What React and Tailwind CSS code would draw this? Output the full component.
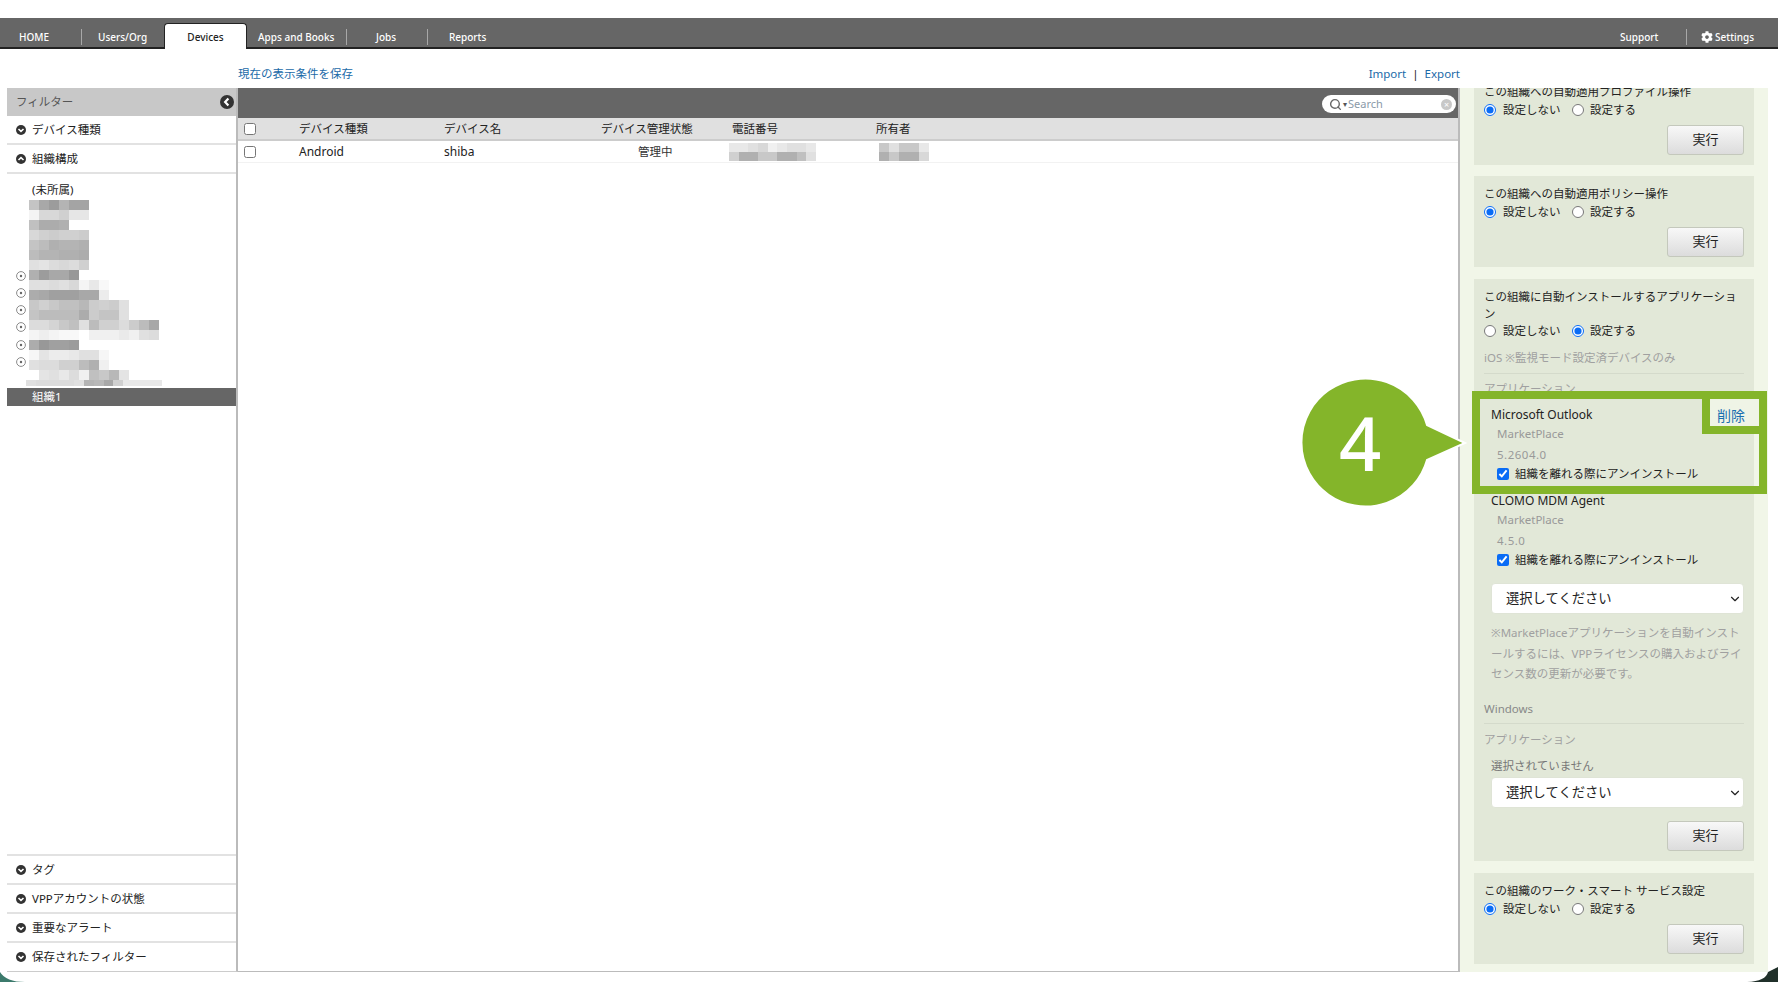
import React from 'react';
import { ChevronDown, Search } from 'lucide-react';
import { FaCog } from 'react-icons/fa';

const FONT = '"Noto Sans", "Noto Sans CJK JP", sans-serif';

const treeMosaic = [
  ['#c4c4c4', '#a8a8a8', '#9c9c9c', '#b4b4b4', '#a4a4a4', '#a4a4a4'],
  ['#f4f4f4', '#d8d8d8', '#d8d8d8', '#d0d0d0', '#e6e6e6', '#e6e6e6'],
  ['#c0c0c0', '#acacac', '#acacac', '#b0b0b0'],
  ['#d8d8d8', '#d0d0d0', '#cccccc', '#d0d0d0', '#d0d0d0', '#cccccc'],
  ['#c4c4c4', '#bcbcbc', '#b0b0b0', '#b4b4b4', '#b4b4b4', '#b0b0b0'],
  ['#bcbcbc', '#b4b4b4', '#b4b4b4', '#b0b0b0', '#b0b0b0', '#acacac'],
  ['#e0e0e0', '#e4e4e4', '#dcdcdc', '#d8d8d8', '#dcdcdc', '#d0d0d0'],
  ['#b0b0b0', '#9c9c9c', '#a8a8a8', '#a8a8a8', '#989898'],
  ['#e0e0e0', '#e0e0e0', '#dcdcdc', '#e0e0e0', '#d8d8d8', '#f4f4f4', '#e8e8e8', '#f8f8f8'],
  ['#acacac', '#a8a8a8', '#a0a0a0', '#a0a0a0', '#a0a0a0', '#a8a8a8', '#a8a8a8', '#ececec'],
  ['#c8c8c8', '#d0d0d0', '#c8c8c8', '#c0c0c0', '#c0c0c0', '#b8b8b8', '#cccccc', '#d0d0d0', '#cccccc', '#e0e0e0'],
  ['#c4c4c4', '#bcbcbc', '#bcbcbc', '#bcbcbc', '#bcbcbc', '#acacac', '#cccccc', '#c4c4c4', '#c4c4c4', '#e0e0e0'],
  ['#dcdcdc', '#dcdcdc', '#d4d4d4', '#c8c8c8', '#c0c0c0', '#e0e0e0', '#bcbcbc', '#d0d0d0', '#d0d0d0', '#dcdcdc', '#cccccc', '#bcbcbc', '#a8a8a8'],
  ['#f4f4f4', '#eeeeee', '#f4f4f4', '#f8f8f8', '#f8f8f8', '#ffffff', '#f0f0f0', '#f0f0f0', '#f0f0f0', '#eaeaea', '#f0f0f0', '#e0e0e0', '#dcdcdc'],
  ['#acacac', '#989898', '#a0a0a0', '#a0a0a0', '#9c9c9c'],
  ['#f6f6f6', '#e4e4e4', '#ececec', '#ececec', '#e8e8e8', '#e0e0e0', '#e0e0e0', '#f6f6f6'],
  ['#e0e0e0', '#dcdcdc', '#dcdcdc', '#d0d0d0', '#d0d0d0', '#bcbcbc', '#b0b0b0', '#f0f0f0'],
  ['#ffffff', '#e4e4e4', '#e0e0e0', '#e8e8e8', '#dcdcdc', '#f0f0f0', '#c0c0c0', '#c8c8c8', '#b8b8b8', '#e4e4e4'],
];

const treeMosaicLast = [
  ['#e0e0e0', '#dcdcdc', '#dcdcdc', '#dcdcdc', '#dcdcdc', '#e0e0e0', '#b4b4b4', '#b8b8b8', '#a8a8a8', '#d0d0d0', '#e8e8e8', '#e8e8e8', '#e8e8e8', '#e8e8e8'],
];

const phoneMosaic = [
  ['#e8e8e8', '#e8e8e8', '#e0e0e0', '#d8d8d8', '#f0f0f0', '#e8e8e8', '#e0e0e0', '#e0e0e0', '#e8e8e8'],
  ['#d0d0d0', '#b0b0b0', '#b0b0b0', '#c8c8c8', '#c8c8c8', '#b0b0b0', '#b0b0b0', '#c0c0c0', '#e0e0e0'],
];

const ownerMosaic = [
  ['#c8c8c8', '#e0e0e0', '#c8c8c8', '#c8c8c8', '#e8e8e8'],
  ['#b0b0b0', '#c8c8c8', '#b0b0b0', '#b0b0b0', '#d8d8d8'],
];

// blurred out names in the screenshot, drawn as rows of grey cells
const Mosaic = ({ rows, rowClass, cellClass = 'w-[10px]' }) => (
  <div className="flex flex-col">
    {rows.map((row, i) => (
      <div key={i} className={`flex ${rowClass}`}>
        {row.map((color, j) => (
          <div key={j} className={`${cellClass} h-full`} style={{ backgroundColor: color }} />
        ))}
      </div>
    ))}
  </div>
);

const RoundChevron = ({ up = false, left = false, size = 10 }) => (
  <svg width={size} height={size} viewBox="0 0 12 12" className="shrink-0">
    <circle cx="6" cy="6" r="6" fill="#333333" />
    <path
      d={left ? 'M7.2 3 L4.4 6 L7.2 9' : up ? 'M3 7.2 L6 4.4 L9 7.2' : 'M3 4.8 L6 7.6 L9 4.8'}
      fill="none"
      stroke="#ffffff"
      strokeWidth="1.9"
    />
  </svg>
);

const TreeMark = () => (
  <svg width="10" height="10" viewBox="0 0 10 10" className="block">
    <circle cx="5" cy="5" r="4.4" fill="#ffffff" stroke="#8a8a8a" />
    <circle cx="5" cy="5" r="1.2" fill="#666666" />
  </svg>
);

const FilterRow = ({ label, up }) => (
  <div className="h-[29px] shrink-0 flex items-center gap-[6px] pl-[9px] border-b-2 border-[#e2e2e2] text-[11.5px] text-[#222]">
    <RoundChevron up={up} />
    <span>{label}</span>
  </div>
);

const Sep = ({ className = '' }) => <div className={`w-px h-[16px] bg-[#a8a8a8] ${className}`} />;

const TopNav = () => (
  <div className="h-[31px] mt-[18px] bg-[#666666] border-b-2 border-[#222] flex items-end text-[10px] font-medium text-white shrink-0">
    <div className="h-[29px] flex items-center pt-[9px] pl-[19px]">
      <span className="w-[62px]">HOME</span>
      <Sep />
      <span className="ml-[16px] w-[66px]">Users/Org</span>
    </div>
    <div className="h-[26px] w-[83px] -mb-[2px] pt-[2px] bg-white border-t border-x border-[#222] rounded-t-sm text-[#222] flex items-center justify-center">
      Devices
    </div>
    <div className="h-[29px] flex items-center pt-[9px] pl-[11px]">
      <span className="w-[88px]">Apps and Books</span>
      <Sep />
      <span className="ml-[29px] w-[51px]">Jobs</span>
      <Sep />
      <span className="ml-[21px]">Reports</span>
    </div>
    <div className="h-[29px] ml-auto flex items-center pt-[9px] pr-[24px]">
      <span className="w-[66px]">Support</span>
      <Sep />
      <FaCog className="ml-[14px] mr-[2px] text-[12px]" />
      <span>Settings</span>
    </div>
  </div>
);

const Sidebar = () => (
  <div className="w-[231px] ml-[7px] shrink-0 flex flex-col border-r-2 border-[#bbbbbb] border-b border-b-[#cccccc]">
    <div className="h-[28px] shrink-0 bg-[#c8c8c8] flex items-center justify-between pl-[9px] pr-[2px] text-[11.5px] text-[#555]">
      <span>フィルター</span>
      <RoundChevron left size={14} />
    </div>
    <FilterRow label="デバイス種類" />
    <FilterRow label="組織構成" up />
    <div className="flex-1 pt-[8px]">
      <div className="h-[18px] pl-[25px] flex items-start text-[11.5px] leading-[16px] text-[#222]">(未所属)</div>
      <div className="relative pl-[22px]">
        <Mosaic rows={treeMosaic} rowClass="h-[10px]" />
        <div className="-ml-[3px]">
          <Mosaic rows={treeMosaicLast} rowClass="h-[6px]" cellClass="w-[9.7px]" />
        </div>
        {[76, 93, 110, 127, 145, 162].map((top) => (
          <div key={top} className="absolute left-[9px]" style={{ top: top - 5 }}>
            <TreeMark />
          </div>
        ))}
      </div>
      <div className="h-[18px] mt-[2px] bg-[#666666] pl-[25px] flex items-center text-[11.5px] text-white">組織1</div>
    </div>
    <div className="border-t-2 border-[#e2e2e2]">
      <FilterRow label="タグ" />
      <FilterRow label="VPPアカウントの状態" />
      <FilterRow label="重要なアラート" />
      <div className="h-[28px] flex items-center gap-[6px] pl-[9px] text-[11.5px] text-[#222]">
        <RoundChevron />
        <span>保存されたフィルター</span>
      </div>
    </div>
  </div>
);

const DeviceTable = () => (
  <div className="flex-1 flex flex-col border-r-2 border-[#bbbbbb] border-b border-b-[#bbbbbb]">
    <div className="h-[30px] shrink-0 bg-[#666666] flex items-center justify-end pt-[2px] pr-[2px]">
      <div className="w-[134px] h-[18px] bg-white rounded-full flex items-center pl-[7px] pr-[4px] text-[11px] text-[#8a9aa8]">
        <Search size={13} strokeWidth={2.6} className="text-[#666]" />
        <span className="ml-[1px] text-[8px] text-[#555]">▾</span>
        <span className="ml-[1px] flex-1">Search</span>
        <span className="w-[11px] h-[11px] rounded-full bg-[#c8c8c8] text-white text-[9px] leading-[11px] text-center">×</span>
      </div>
    </div>
    <div className="h-[23px] shrink-0 bg-[#e0e0e0] border-b-2 border-[#cccccc] flex items-center text-[11.5px] text-[#222]">
      <input type="checkbox" className="ml-[6px] w-[12px] h-[12px] m-0 shrink-0" />
      <span className="ml-[43px] w-[145px]">デバイス種類</span>
      <span className="w-[157px]">デバイス名</span>
      <span className="w-[131px]">デバイス管理状態</span>
      <span className="w-[144px]">電話番号</span>
      <span>所有者</span>
    </div>
    <div className="h-[22px] shrink-0 border-b border-[#f2f2f2] flex items-center text-[12px] text-[#222]">
      <input type="checkbox" className="ml-[6px] w-[12px] h-[12px] m-0 shrink-0" />
      <span className="ml-[43px] w-[145px]">Android</span>
      <span className="w-[157px]">shiba</span>
      <span className="w-[128px] pl-[37px] text-[11.5px] text-[#333]">管理中</span>
      <div className="w-[150px]">
        <Mosaic rows={phoneMosaic} rowClass="h-[9px]" cellClass="w-[9.67px]" />
      </div>
      <Mosaic rows={ownerMosaic} rowClass="h-[9px]" />
    </div>
  </div>
);

const RadioPair = ({ checked }) => (
  <div className="h-[17px] flex items-center text-[11.5px] text-[#222]">
    <input type="radio" readOnly checked={checked === 'off'} className="m-0 w-[12px] h-[12px] accent-[#0a6cf5]" />
    <span className="ml-[7px] w-[69px]">設定しない</span>
    <input type="radio" readOnly checked={checked === 'on'} className="m-0 w-[12px] h-[12px] accent-[#0a6cf5]" />
    <span className="ml-[6px]">設定する</span>
  </div>
);

const RunButton = () => (
  <div className="flex justify-end">
    <button className="w-[77px] h-[30px] rounded-[3px] border border-[#c4c8bc] bg-gradient-to-b from-[#f8f8f8] to-[#dcdcdc] text-[13px] text-[#222]">
      実行
    </button>
  </div>
);

const SimpleCard = ({ title, checked, className = '' }) => (
  <div className={`bg-[#e2e8d8] h-[91px] px-[10px] pt-[9px] ${className}`}>
    <div className="h-[18px] flex items-center text-[11.5px] text-[#222] leading-none whitespace-nowrap">{title}</div>
    <RadioPair checked={checked} />
    <div className="mt-[7px]">
      <RunButton />
    </div>
  </div>
);

const FakeSelect = () => (
  <div className="ml-[7px] h-[31px] bg-white rounded-[4px] border border-[#dfe4d6] flex items-center justify-between pl-[14px] pr-[1px] text-[13.3px] text-[#222]">
    <span>選択してください</span>
    <ChevronDown size={14} strokeWidth={2} className="text-[#222]" />
  </div>
);

const AppEntry = ({ name, version, topClass = '' }) => (
  <div className={`pl-[7px] ${topClass}`}>
    <div className="h-[18px] flex items-center text-[12px] text-[#222]">{name}</div>
    <div className="h-[20px] pl-[6px] flex items-center text-[11.5px] text-[#999]">MarketPlace</div>
    <div className="h-[21px] pl-[6px] flex items-center text-[11.5px] tracking-[0.5px] text-[#999]">{version}</div>
    <div className="h-[18px] pl-[6px] flex items-center text-[11.5px] text-[#222]">
      <input type="checkbox" readOnly checked className="m-0 w-[12px] h-[12px] accent-[#0a6cf5]" />
      <span className="ml-[6px]">組織を離れる際にアンインストール</span>
    </div>
  </div>
);

const InstallCard = () => (
  <div className="bg-[#e2e8d8] h-[582px] mt-[12px] px-[10px] pt-[9px]">
    <div className="text-[11.5px] leading-[17px] text-[#222]">この組織に自動インストールするアプリケーション</div>
    <RadioPair checked="on" />
    <div className="h-[17px] mt-[10px] flex items-center text-[11.5px] text-[#a0a0a0]">iOS ※監視モード設定済デバイスのみ</div>
    <div className="h-px mt-[7px] bg-[#d4dacb]" />
    <div className="h-[17px] mt-[6px] flex items-center text-[11.5px] text-[#a0a0a0]">アプリケーション</div>
    <AppEntry name="Microsoft Outlook" version="5.2604.0" topClass="mt-[9px]" />
    <AppEntry name="CLOMO MDM Agent" version="4.5.0" topClass="mt-[9px]" />
    <div className="mt-[14px]">
      <FakeSelect />
    </div>
    <div className="pl-[7px] mt-[9px] text-[11.5px] leading-[20.7px] text-[#a0a0a0]">
      ※MarketPlaceアプリケーションを自動インストールするには、VPPライセンスの購入およびライセンス数の更新が必要です。
    </div>
    <div className="h-[17px] mt-[15px] flex items-center text-[11.5px] text-[#888]">Windows</div>
    <div className="h-px mt-[6px] bg-[#d4dacb]" />
    <div className="h-[17px] mt-[7px] flex items-center text-[11.5px] text-[#a0a0a0]">アプリケーション</div>
    <div className="h-[17px] mt-[9px] pl-[7px] flex items-center text-[11.5px] text-[#777]">選択されていません</div>
    <div className="mt-[3px]">
      <FakeSelect />
    </div>
    <div className="mt-[13px]">
      <RunButton />
    </div>
  </div>
);

const SidePanel = () => (
  <div className="w-[308px] shrink-0 bg-[#f1f6e8] overflow-hidden px-[14px]">
    <div className="-mt-[14px]">
      <SimpleCard title="この組織への自動適用プロファイル操作" checked="off" />
      <SimpleCard title="この組織への自動適用ポリシー操作" checked="off" className="mt-[11px]" />
      <InstallCard />
      <SimpleCard title="この組織のワーク・スマート サービス設定" checked="off" className="mt-[12px]" />
    </div>
  </div>
);

// green annotation drawn over the screenshot
const Callout = () => (
  <>
    <div className="absolute left-[1472px] top-[391px] w-[295px] h-[103px] border-[8px] border-[#84b52a]" />
    <div className="absolute left-[1702px] top-[391px] w-[65px] h-[43px] border-[8px] border-[#84b52a] bg-[#eff4e6] flex items-center justify-center pt-[5px] pr-[7px] text-[14px] text-[#1a6fb0]">
      削除
    </div>
    <div className="absolute left-[1298px] top-[376px] w-[172px] h-[134px]">
      <svg width="172" height="134" viewBox="0 0 172 134" className="block">
        <path d="M129 49 L167 67 L129 84 A64 64 0 1 1 129 49 Z" fill="#84b52a" stroke="#ffffff" strokeWidth="2" />
      </svg>
      <span className="absolute left-[41px] top-[17px] text-[74px] leading-[100px] font-medium text-white">4</span>
    </div>
  </>
);

export default function App() {
  return (
    <div className="relative w-[1778px] h-[1000px] bg-white overflow-hidden" style={{ fontFamily: FONT }}>
      <div className="h-[972px] flex flex-col">
        <TopNav />
        <div className="h-[39px] shrink-0 relative flex items-center text-[11.5px] text-[#1a6aa8]">
          <span className="ml-[238px] pt-[11px]">現在の表示条件を保存</span>
          <div className="ml-auto mr-[318px] pt-[11px] flex items-center">
            <span>Import</span>
            <span className="mx-[6px] text-[#222]">|</span>
            <span>Export</span>
          </div>
        </div>
        <div className="flex-1 flex min-h-0 pr-[10px]">
          <Sidebar />
          <DeviceTable />
          <SidePanel />
        </div>
      </div>
      <Callout />
      <svg width="25" height="10" viewBox="0 0 25 10" className="absolute left-0 top-[972px]">
        <path d="M0 0 Q6 10 25 10 L0 10 Z" fill="#3c7a6c" />
      </svg>
      <svg width="31" height="15" viewBox="0 0 31 15" className="absolute left-[1747px] top-[967px]">
        <path d="M21 5 Q19 14 0 15 L31 15 L31 0 Z" fill="#20302a" />
      </svg>
    </div>
  );
}
